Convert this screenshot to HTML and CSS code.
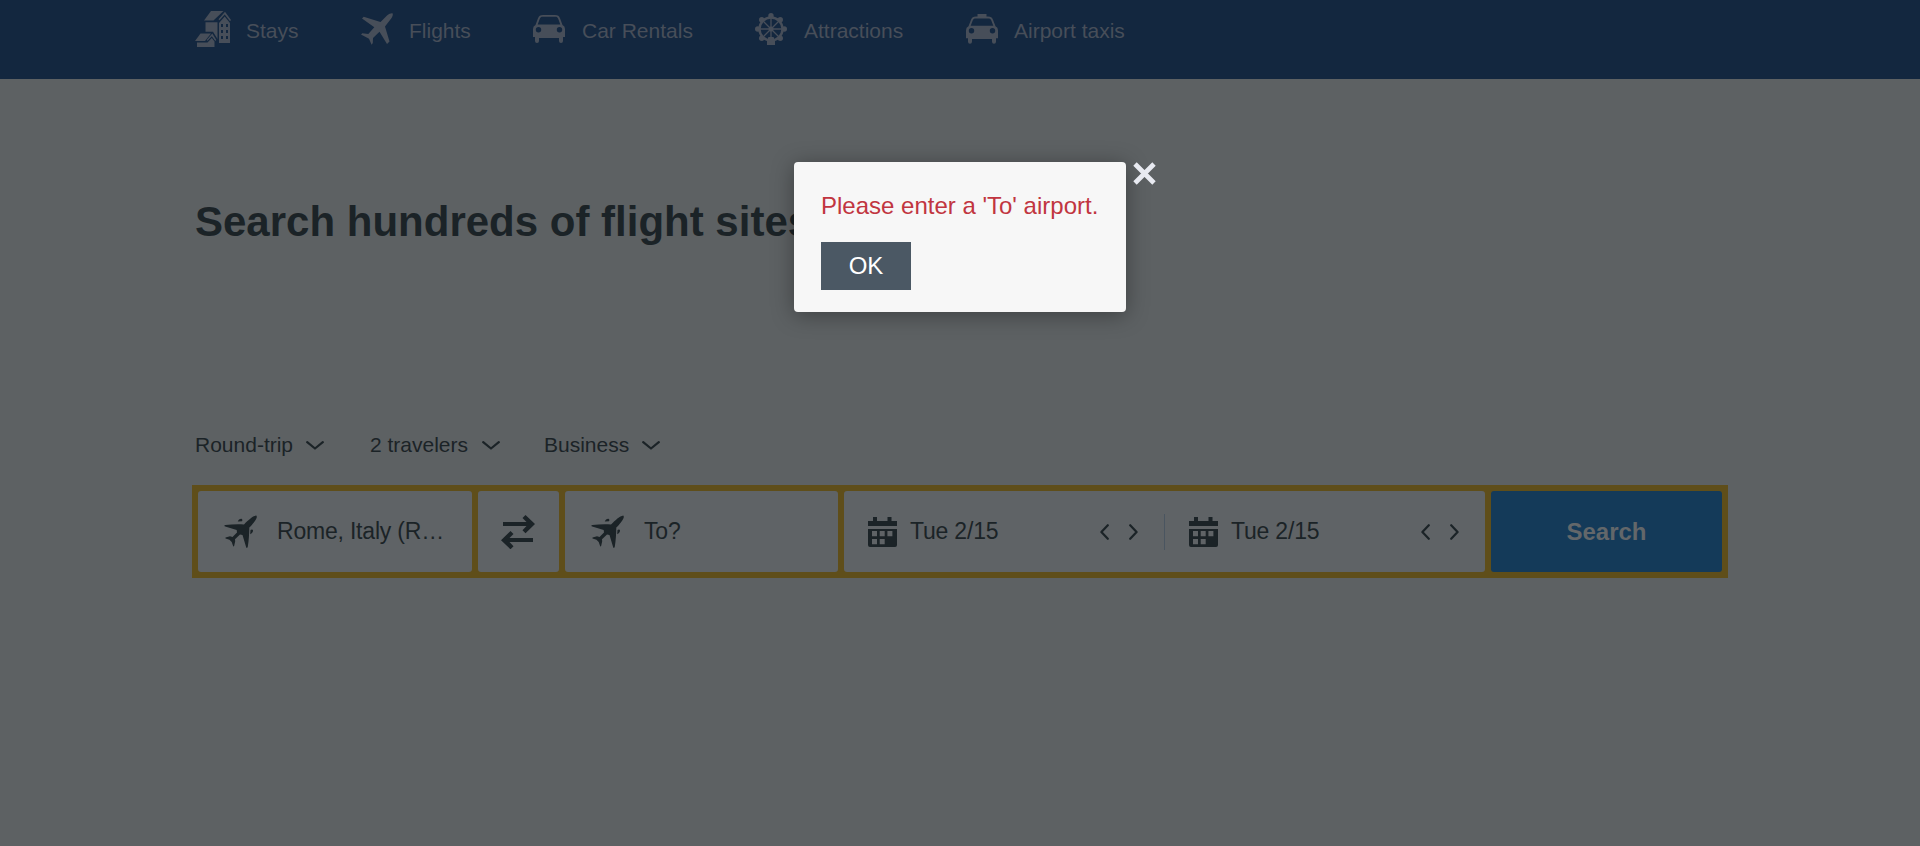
FILE: index.html
```html
<!DOCTYPE html>
<html lang="en">
<head>
<meta charset="utf-8">
<title>Flights</title>
<link rel="stylesheet" href="styles.css">
</head>
<body>
<svg class="defs" width="0" height="0" aria-hidden="true">
  <symbol id="plane" viewBox="0 0 33 34">
    <path d="M32.300.4c.9 1 .6 2.800-.9 4.800-1.700 2.700-3.800 5.200-6.100 7.300-.1 6-.5 13.500-1.500 19-.3 1.700-1.300 2-1.700.5L18.500 20l-2.500-.5-5 4.800.2 2-1.200 5.200-.8-.2-1.500-4.300L5.500 24.700 1.500 23.500v-.9l4.500-1.300 2.500.6L13 17.500 12.700 15 1.200 11.600C.1 11.200.1 10.200 1.300 10 8 9.200 14 9.200 20 9.400 24.500 5 28.500 1 32.300.4z"/>
    <path d="M13.800 6.500c.6-1.800 2.500-3.200 4-2.600.8.400.7 1.400.2 2.300zM26.200 19.300l.3-4.200c1-.9 2.300-.7 2.500.2.200 1.500-1 3.200-2.800 4z"/>
  </symbol>
  <symbol id="calendar" viewBox="0 0 29 30">
    <path fill-rule="evenodd" d="M0 4h5V0h4v4h10.500V0h4v4H29v5H0zM0 12h29v16q0 2-2 2H2q-2 0-2-2zM4 14v5.300h5V14zm7.700 0v5.300h5V14zm7.700 0v5.300h5V14zM4 22v5.300h5V22zm7.700 0v5.300h5V22z"/>
  </symbol>
  <symbol id="down" viewBox="0 0 18 9"><path class="line" d="M1.200 1.200 9 7.500l7.800-6.300"/></symbol>
  <symbol id="prev" viewBox="0 0 9 16"><path class="line" d="M7.800 1.200 1.400 8l6.400 6.800"/></symbol>
  <symbol id="next" viewBox="0 0 9 16"><path class="line" d="M1.200 1.200 7.600 8l-6.400 6.800"/></symbol>
</svg>

<header class="topbar">
  <nav class="nav">
    <a class="nav-item"><span class="nav-icon"><svg width="36" height="36" viewBox="0 0 36 36"><path d="M16 0h12.500L18.500 9.500H9z"/><path d="M30 .8l6 8.200-1 1.300-5.300-6.800-5.200 5.700-1-1z"/><path d="M10.500 11.300h12V28L18 20.800H10.500z"/><path fill-rule="evenodd" d="M29.700 5.500 35 12v20H24V12zM26 13v3h2v-3zm5 0v3h2v-3zm-5 6v3h2v-3zm5 0v3h2v-3zm-5 6v3h2v-3zm5 0v3h2v-3z"/><path d="M5.500 22.500H16L10 30H0z"/><path d="M17.300 22.500l4 6.500-1 .9-3.500-4.600-4.200 4.500-1-.8z"/><path d="M16.800 27l2.700 3.500V36H2v-4.500h10.500z"/></svg></span><span class="nav-label">Stays</span></a>
    <a class="nav-item"><span class="nav-icon"><svg width="32" height="32" viewBox="0 0 32 32"><path d="M31.500.3c.8 1.300 0 3.500-1.500 5.500L24 13.500l4.500 15L26 31 18.500 18.700 12 25l-.2 5-1.200 1.800L8 25.800 0 21.500l1.300-1.200 6 .6 6-6.700L1 5.500 2.700 3.800 19.500 9 26 2.500C28.200.7 30.500-.2 31.500.3z"/></svg></span><span class="nav-label">Flights</span></a>
    <a class="nav-item"><span class="nav-icon"><svg width="32" height="28" viewBox="0 0 32 28"><path fill-rule="evenodd" d="M10 0h12c3 0 4 .8 5 3.300L29.500 10q2.500 1 2.500 4v8h-2v4q0 2-2 2t-2-2v-3H6v3q0 2-2 2t-2-2v-4H0v-8q0-3 2.500-4L5 3.300C6 .8 7 0 10 0zM10 1.800C8 1.800 7.400 2.300 6.700 4L4.700 9.500h22.600L25.300 4c-.7-1.700-1.300-2.200-3.300-2.200zM5.500 12a2.700 2.700 0 1 0 0 5.400 2.700 2.700 0 0 0 0-5.400zm21 0a2.700 2.700 0 1 0 0 5.400 2.700 2.700 0 0 0 0-5.400z"/></svg></span><span class="nav-label">Car Rentals</span></a>
    <a class="nav-item"><span class="nav-icon"><svg width="32" height="32" viewBox="0 0 32 32"><g fill="none" stroke="currentColor"><circle cx="16" cy="16" r="11.500" stroke-width="2.400"/><path stroke-width="1.300" d="M16 5v22M5 16h22M8 8l16 16M24 8 8 24"/></g><circle cx="16" cy="16" r="2.500"/><circle cx="16" cy="2.700" r="2.700"/><circle cx="2.700" cy="16" r="2.700"/><circle cx="29.300" cy="16" r="2.700"/><circle cx="6.700" cy="6.700" r="2.700"/><circle cx="25.300" cy="6.700" r="2.700"/><circle cx="6.700" cy="25.300" r="2.700"/><circle cx="25.300" cy="25.300" r="2.700"/><path d="M13.500 24h5l1.500 3v5h-8v-5z"/></svg></span><span class="nav-label">Attractions</span></a>
    <a class="nav-item"><span class="nav-icon"><svg width="32" height="30" viewBox="0 0 32 30"><path fill-rule="evenodd" d="M11.500 0h9v2.500H22c3 0 4 .8 5 3.300l2.500 6.500q2.500 1 2.500 4v8h-2v3.500q0 2-2 2t-2-2V25H6v2.800q0 2-2 2t-2-2v-3.500H0v-8q0-3 2.500-4L5 5.800c1-2.500 2-3.300 5-3.300h1.500zM10 4.500C8 4.500 7.400 5 6.700 6.500L4.700 11.800h22.600L25.300 6.500C24.600 5 24 4.500 22 4.500zM5.500 14a2.700 2.700 0 1 0 0 5.400 2.700 2.700 0 0 0 0-5.400zm21 0a2.700 2.700 0 1 0 0 5.400 2.700 2.700 0 0 0 0-5.400z"/></svg></span><span class="nav-label">Airport taxis</span></a>
  </nav>
</header>

<main class="page">
  <h1 class="title">Search hundreds of flight sites</h1>

  <div class="filters">
    <span class="filter filter-trip">Round-trip <svg width="18" height="9"><use href="#down"/></svg></span>
    <span class="filter filter-people">2 travelers <svg width="18" height="9"><use href="#down"/></svg></span>
    <span class="filter filter-cabin">Business <svg width="18" height="9"><use href="#down"/></svg></span>
  </div>

  <form class="search">
    <div class="cell place"><svg width="33" height="34"><use href="#plane"/></svg><span class="value">Rome, Italy (R…</span></div>
    <div class="cell swap"><svg width="34" height="34" viewBox="0 0 34 34"><path d="M2 7h23.500l-4-4L24.500 0 34 9l-9.500 9.300-3-3L25.500 11H2zM32 23H8.500l4-4-3-3L0 25.300l9.500 9 3-3L8.500 27H32z"/></svg></div>
    <div class="cell place"><svg width="33" height="34"><use href="#plane"/></svg><span class="value">To?</span></div>
    <div class="cell dates">
      <div class="date">
        <svg width="29" height="30"><use href="#calendar"/></svg><span class="value">Tue 2/15</span>
        <span class="steps"><svg width="9" height="16"><use href="#prev"/></svg><svg width="9" height="16"><use href="#next"/></svg></span>
      </div>
      <div class="date">
        <svg width="29" height="30"><use href="#calendar"/></svg><span class="value">Tue 2/15</span>
        <span class="steps"><svg width="9" height="16"><use href="#prev"/></svg><svg width="9" height="16"><use href="#next"/></svg></span>
      </div>
    </div>
    <button class="submit" type="button">Search</button>
  </form>
</main>

<div class="dialog" role="dialog">
  <p class="message">Please enter a 'To' airport.</p>
  <button class="ok" type="button">OK</button>
  <svg class="close" width="23" height="23" viewBox="0 0 23 23"><path d="M2 2l19 19M21 2 2 21"/></svg>
</div>
</body>
</html>
```
FILE: styles.css
```css
* { box-sizing: border-box; }
body {
  margin: 0;
  height: 846px;
  overflow: hidden;
  background: #5d6163;
  color: #1b2327;
  font-family: "Liberation Sans", Arial, sans-serif;
  font-size: 21px;
}
svg { display: block; flex: none; fill: currentColor; }
.defs { position: absolute; }
.line { fill: none; stroke: currentColor; stroke-width: 2.2; stroke-linecap: round; stroke-linejoin: round; }

.topbar { height: 79px; padding-left: 195px; background: #13273f; color: #474e59; }
.nav { display: grid; grid-template-columns: 164px 172px 222px 211px auto; height: 58px; }
.nav-item { display: flex; align-items: center; gap: 15px; white-space: nowrap; }
.nav-icon { width: 36px; display: flex; justify-content: center; }
.nav-label { padding-top: 4px; }
.nav-item:last-child, .nav-item:nth-child(2) { gap: 14px; }

.page { padding: 113px 192px 0; }
.title { margin: 0; padding-left: 3px; font-size: 42px; line-height: 60px; font-weight: 700; white-space: nowrap; }

.filters { display: flex; margin-top: 178px; padding-left: 3px; height: 30px; }
.filter { display: flex; align-items: center; justify-content: space-between; white-space: nowrap; }
.filter-trip { width: 129px; }
.filter-people { width: 130px; margin-left: 46px; }
.filter-cabin { width: 116px; margin-left: 44px; }

.search {
  display: grid;
  grid-template-columns: 274px 81px 273px 641px 231px;
  gap: 6px;
  height: 93px;
  margin-top: 25px;
  padding: 6px;
  background: #5f4e1a;
}
.cell { display: flex; align-items: center; border-radius: 3px; background: #5f6366; }
.place { padding-left: 26px; gap: 20px; }
.value { margin-bottom: 2px; font-size: 23px; line-height: 30px; letter-spacing: -.2px; white-space: nowrap; }
.swap { justify-content: center; padding-right: 1px; }
.date { display: flex; align-items: center; width: 320px; height: 36px; padding: 0 26px 0 24px; gap: 13px; }
.date + .date { width: 321px; border-left: 1px solid #4a5560; }
.steps { display: flex; gap: 20px; margin-left: auto; }
.submit { border: 0; border-radius: 3px; background: #143a59; color: #63676a; font: 700 24px "Liberation Sans", Arial, sans-serif; }

.dialog {
  position: absolute;
  left: 794px;
  top: 162px;
  width: 332px;
  height: 150px;
  padding: 29px 27px;
  border-radius: 4px;
  background: #f7f7f7;
  box-shadow: 0 3px 22px rgba(0, 0, 0, .35);
}
.message { margin: 0 0 21px; color: #c13540; font-size: 24px; line-height: 30px; white-space: nowrap; }
.ok { display: block; width: 90px; height: 48px; padding: 0; border: 0; background: #4b5864; color: #fff; font: 24px "Liberation Sans", Arial, sans-serif; }
.close { position: absolute; left: 339px; top: 0; fill: none; stroke: #e8eaf1; stroke-width: 4.800; }
```
